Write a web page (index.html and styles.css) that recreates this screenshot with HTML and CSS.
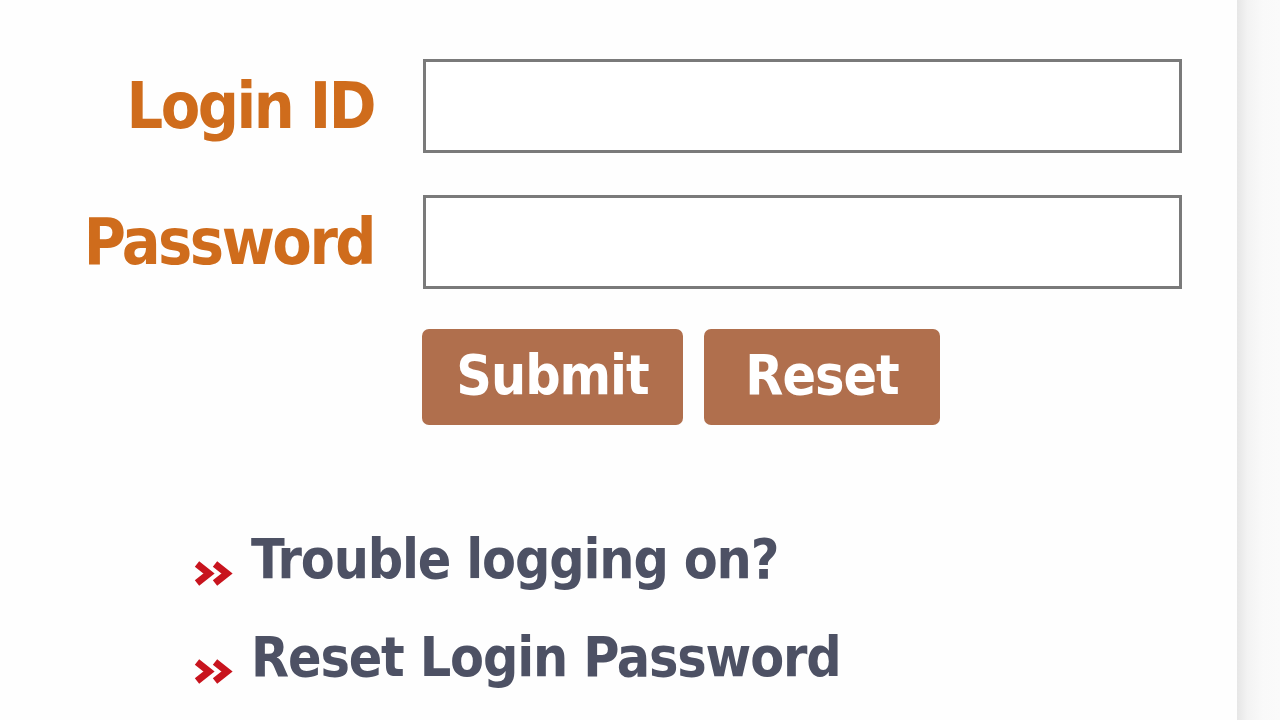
FILE: index.html
```html
<!DOCTYPE html>
<html lang="en">
<head>
    <meta charset="UTF-8">
    <meta name="viewport" content="width=device-width, initial-scale=1.0">
    <title>Login</title>
    <link rel="stylesheet" href="styles.css">
</head>
<body>
    <div class="page">
        <div class="login-box">
            <form class="login-form">
                <label for="loginid">Login ID</label>
                <input type="text" id="loginid">
                <label for="password">Password</label>
                <input type="password" id="password">
                <div class="buttons">
                    <button type="submit" class="btn btn-submit">Submit</button>
                    <button type="reset" class="btn btn-reset">Reset</button>
                </div>
            </form>

            <ul class="links">
                <li>
                    <svg class="arrows" width="40" height="27" viewBox="0 0 40 27">
                        <polyline points="4,4 16,13.5 4,23" />
                        <polyline points="22,4 34,13.5 22,23" />
                    </svg>
                    <a href="#">Trouble logging on?</a>
                </li>
                <li>
                    <svg class="arrows" width="40" height="27" viewBox="0 0 40 27">
                        <polyline points="4,4 16,13.5 4,23" />
                        <polyline points="22,4 34,13.5 22,23" />
                    </svg>
                    <a href="#">Reset Login Password</a>
                </li>
            </ul>
        </div>
        <div class="side"></div>
    </div>
</body>
</html>
```

FILE: styles.css
```css
body {
    margin: 0;
    background-color: #fefefe;
    font-family: 'DejaVu Sans Condensed', 'DejaVu Sans', sans-serif;
    font-weight: bold;
    overflow: hidden;
}

.page {
    display: flex;
    height: 720px;
}

.login-box {
    flex: 1;
    padding-top: 59px;
}

.side {
    width: 43px;
    background: linear-gradient(to right, #e6e6e6, #f3f3f3 25%, #f9f9f9 60%, #fafafa);
}

.login-form {
    display: grid;
    grid-template-columns: 374px 759px;
    column-gap: 49px;
    row-gap: 42px;
    align-items: center;
}

.login-form label {
    text-align: right;
    font-size: 64px;
    letter-spacing: -2.5px;
    color: #cf6c1c;
}

.login-form input {
    height: 94px;
    box-sizing: border-box;
    border: 3px solid #7a7a7a;
    background: #ffffff;
    margin: 0;
    outline: none;
}

.buttons {
    grid-column: 2;
    display: flex;
    gap: 21px;
    margin-left: -1px;
    margin-top: -2px;
}

.btn {
    height: 96px;
    border: none;
    border-radius: 7px;
    background-color: #b06f4d;
    color: #ffffff;
    font-family: inherit;
    font-weight: bold;
    font-size: 55px;
    letter-spacing: -1px;
    padding: 0 0 4px;
}

.btn-submit {
    width: 261px;
}

.btn-reset {
    width: 236px;
}

.links {
    list-style: none;
    margin: 85px 0 0 193px;
    padding: 0;
}

.links li {
    height: 98px;
    font-size: 0;
}

.arrows {
    margin-right: 18px;
    vertical-align: -9px;
}

.arrows polyline {
    fill: none;
    stroke: #c8141e;
    stroke-width: 7;
}

.links a {
    font-size: 55px;
    line-height: 98px;
    letter-spacing: -1.15px;
    color: #4d5164;
    text-decoration: none;
}
```
